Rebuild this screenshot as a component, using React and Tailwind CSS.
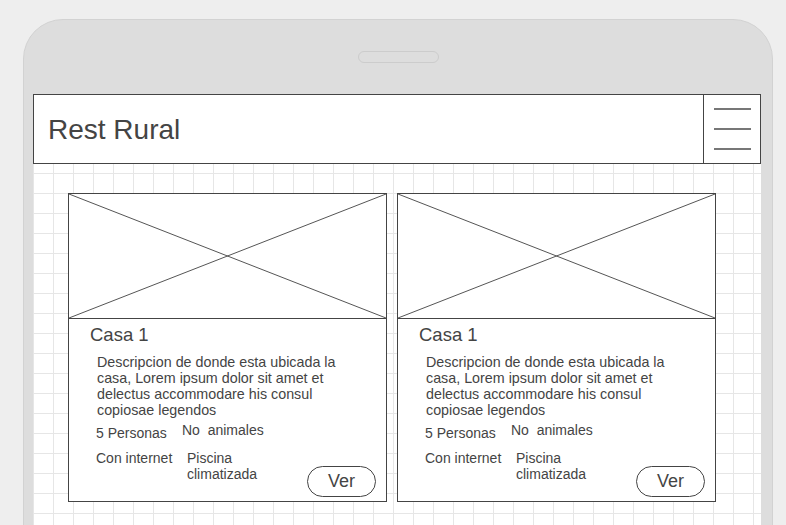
import React from 'react';

const font = { fontFamily: '"Liberation Sans", Arial, sans-serif' };

function Card() {
  return (
    <div className="w-[319px] h-[309px] border border-[#444] bg-white flex flex-col">
      <div className="h-[125px] shrink-0 border-b border-[#444] relative">
        <svg className="absolute inset-0 w-full h-full" preserveAspectRatio="none" viewBox="0 0 317 124">
          <line x1="0" y1="0" x2="317" y2="124" stroke="#555" strokeWidth="1" vectorEffect="non-scaling-stroke" />
          <line x1="317" y1="0" x2="0" y2="124" stroke="#555" strokeWidth="1" vectorEffect="non-scaling-stroke" />
        </svg>
      </div>
      <div className="flex-1 relative text-[#444]">
        <div className="pl-[21px] pt-[6px] text-[18.5px] leading-[20px]">Casa 1</div>
        <div className="pl-[28px] pt-[9px] pr-[40px] text-[14.3px] leading-[16px]">
          Descripcion de donde esta ubicada la casa, Lorem ipsum dolor sit amet et delectus accommodare his consul copiosae legendos
        </div>
        <div className="flex pl-[27px] pt-[4px] text-[14px] leading-[16px]">
          <span className="w-[86px] pt-[3px]">5 Personas</span>
          <span>No&nbsp; animales</span>
        </div>
        <div className="flex pl-[27px] pt-[9px] text-[14px] leading-[16px]">
          <span className="w-[91px]">Con internet</span>
          <span>Piscina<br />climatizada</span>
        </div>
        <div className="absolute right-[10px] bottom-[4px] w-[69px] h-[31px] rounded-full border border-[#444] flex items-center justify-center text-[18px]">
          Ver
        </div>
      </div>
    </div>
  );
}

export default function App() {
  return (
    <div className="w-[786px] h-[525px] bg-[#eeeeee] overflow-hidden pt-[19px] pl-[23px]" style={font}>
      <div className="w-[750px] h-[540px] rounded-t-[40px] bg-[#dddddd] border border-[#d2d2d2] flex flex-col">
        <div className="h-[74px] shrink-0 flex justify-center pt-[31px]">
          <div className="w-[81px] h-[12px] rounded-full border border-[#cccccc] bg-[#dddddd]" />
        </div>
        <div className="ml-[9px] w-[728px] shrink-0">
          <div className="h-[70px] bg-white border border-[#444] flex">
            <div className="flex-1 flex items-center pl-[14px] pt-[1px] text-[28px] text-[#444]">Rest Rural</div>
            <div className="w-[57px] border-l border-[#444] flex flex-col items-center justify-center gap-[18px]">
              <div className="w-[37px] h-[2px] bg-[#777]" />
              <div className="w-[37px] h-[2px] bg-[#777]" />
              <div className="w-[37px] h-[2px] bg-[#777]" />
            </div>
          </div>
          <div className="h-[380px] bg-white bg-[linear-gradient(to_right,#e6e6e6_1px,transparent_1px),linear-gradient(to_bottom,#e6e6e6_1px,transparent_1px)] bg-[size:20px_20px] bg-[position:0px_9px] pt-[29px] pl-[35px] flex gap-[10px]">
            <Card />
            <Card />
          </div>
        </div>
      </div>
    </div>
  );
}
